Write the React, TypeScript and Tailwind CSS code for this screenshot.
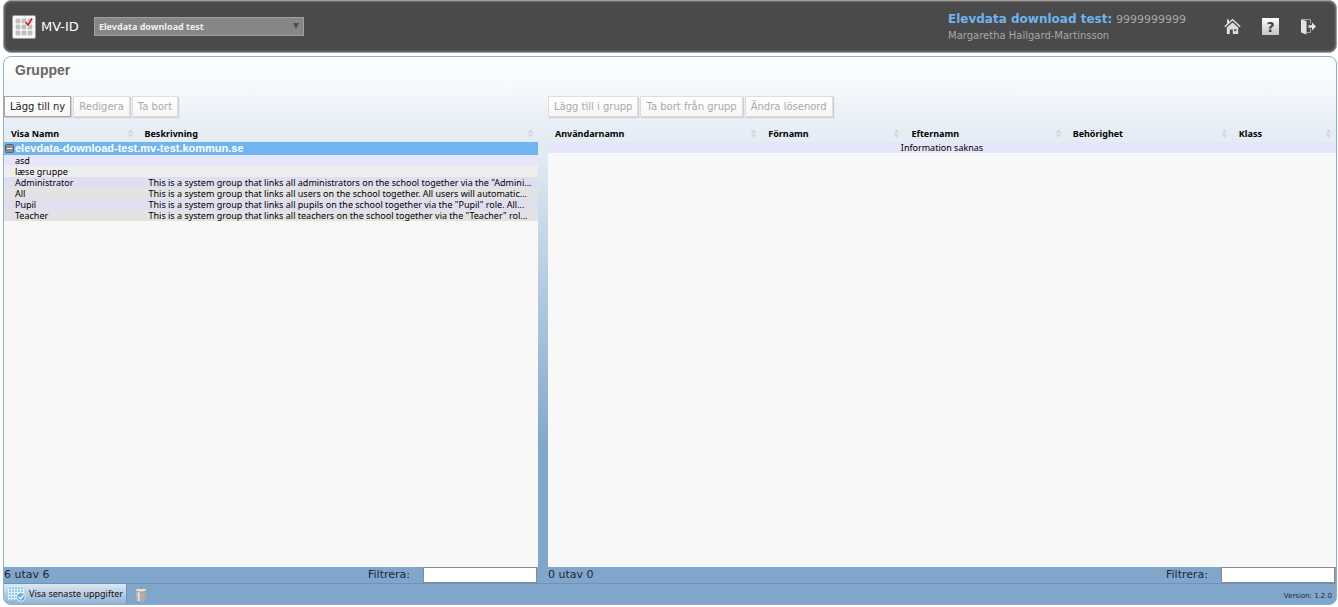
import React, { useState } from "react";

const GROUPS = [
  { name: "asd", text: "", tone: "bg-[#e6e6fa]" },
  { name: "læse gruppe", text: "", tone: "bg-[#eeeeee]" },
  { name: "Administrator", text: 'This is a system group that links all administrators on the school together via the "Admini...', tone: "bg-[#e0dff0]" },
  { name: "All", text: "This is a system group that links all users on the school together. All users will automatic...", tone: "bg-[#e3e3e3]" },
  { name: "Pupil", text: 'This is a system group that links all pupils on the school together via the "Pupil" role. All...', tone: "bg-[#e0dff0]" },
  { name: "Teacher", text: 'This is a system group that links all teachers on the school together via the "Teacher" rol...', tone: "bg-[#e3e3e3]" },
];

function Sort() {
  return (
    <svg viewBox="0 0 5 9" className="h-[9px] w-[5px] shrink-0 fill-[#d6d8da]" aria-hidden="true">
      <path d="M2.5 0 5 4H0zM2.5 9 5 5H0z" />
    </svg>
  );
}

function Heading({ label, width }: { label: string; width: string }) {
  return (
    <th scope="col" className={`p-0 text-left font-bold ${width}`}>
      <div className="flex h-4 items-center justify-between pr-[5px] pb-px pl-[7px]">
        <span>{label}</span>
        <Sort />
      </div>
    </th>
  );
}

function ToolButton({ children, disabled = false }: { children: React.ReactNode; disabled?: boolean }) {
  return (
    <button
      disabled={disabled}
      className="h-[21px] border border-[#a8a8a8] bg-linear-to-b from-white to-[#f6f6f6] px-[5px] text-[10px] leading-4 whitespace-nowrap text-[#222] shadow-[1px_1px_1px_#d0d0d0] disabled:border-[#dedede] disabled:text-[#a9a9a9]"
    >
      {children}
    </button>
  );
}

function PanelFooter({ count, id }: { count: string; id: string }) {
  const [value, setValue] = useState("");
  return (
    <div className="flex h-4 shrink-0 items-center bg-[#81a6cc] text-[11px] leading-4 text-[#1c2733]">
      <span className="grow">{count}</span>
      <label htmlFor={id} className="pr-[13px]">Filtrera:</label>
      <input
        id={id}
        value={value}
        onChange={(e) => setValue(e.target.value)}
        className="mr-px h-4 w-[114px] border border-[#8a8a8a] bg-white px-1 text-[10px]"
      />
    </div>
  );
}

function Logo() {
  return (
    <svg viewBox="0 0 24 24" className="size-6 shrink-0" aria-hidden="true">
      <rect x="0" y="0" width="24" height="24" rx="2" fill="#9a9a9a" />
      <rect x="1" y="1" width="22" height="22" rx="1" fill="#f8f8f8" />
      <path
        d="M4 4h4v4H4zM10 4h4v4h-4zM16 4h4v4h-4zM4 10h4v4H4zM10 10h4v4h-4zM16 10h4v4h-4zM4 16h4v4H4zM10 16h4v4h-4zM16 16h4v4h-4z"
        fill="#bdbdbd"
        stroke="#c4c4c4"
        strokeWidth=".8"
      />
      <path d="M13 7l3 3 4-6.500" fill="none" stroke="#f8f8f8" strokeWidth="3" />
      <path d="M13.500 7l2.500 3 4-6.500" fill="none" stroke="#dc1f2c" strokeWidth="1.800" />
    </svg>
  );
}

function HomeIcon() {
  return (
    <svg viewBox="0 0 17 17" className="size-[17px]" aria-hidden="true">
      <path d="M3 1.500h2v3L3 6.500z" fill="#dcdcdc" />
      <path d="M.8 8.800 8.500 1.600l7.700 7.200" fill="none" stroke="#ececec" strokeWidth="1.300" />
      <path d="M2.800 9.600 8.500 4.400l5.700 5.200V16H8.800v-4.500h-3V16h-3z" fill="#dcdcdc" />
      <path d="M10.300 11.200h2v2h-2z" fill="#4a4a4a" />
    </svg>
  );
}

function ExitIcon() {
  return (
    <svg viewBox="0 0 17 17" className="size-[17px]" aria-hidden="true">
      <path d="M2 1.500h8.500v4M10.500 11v3.500H6.500" fill="none" stroke="#a5a5a5" strokeWidth="1" />
      <path d="M1 1.500 6.500 3v13.500L1 14.500z" fill="#e2e2e2" />
      <path d="M8.500 7.200h3.500V4.500l4 4-4 4V9.800H8.500z" fill="#e6e6e6" />
    </svg>
  );
}

function LatestIcon() {
  return (
    <svg viewBox="0 0 18 16" className="h-4 w-[18px] shrink-0" aria-hidden="true">
      <rect width="16" height="14" fill="#8fcdec" />
      <path
        d="M0 .5h16M0 3.500h16M0 6.500h16M0 9.500h16M0 12.500h16M.5 0v14M3.500 0v14M6.500 0v14M9.500 0v14M12.500 0v14M15.500 0v14"
        stroke="#dceffa"
        strokeWidth="1"
      />
      <circle cx="13" cy="11" r="4.300" fill="#5fb0e0" stroke="#e6f4fc" strokeWidth="1" />
      <path d="M10.800 11l1.700 1.800 3-3.500" fill="none" stroke="#fff" strokeWidth="1.400" />
    </svg>
  );
}

function TrashIcon() {
  return (
    <svg viewBox="0 0 12 15" className="h-[15px] w-3" aria-hidden="true">
      <path d="M1 3.500h10l-.6 10.300Q6 15.500 1.600 13.800z" fill="#b9b8b0" />
      <path d="M3.800 5v9" stroke="#e6e5df" strokeWidth="1.600" />
      <path d="M5.800 5v9M8 5v9M9.700 5v8.500" stroke="#98978f" strokeWidth=".6" />
      <ellipse cx="6" cy="3" rx="5.700" ry="1.900" fill="#e4e3dc" stroke="#8f8e87" strokeWidth=".6" />
      <path d="M4.500 1.500Q6 0 7.500 1.500" fill="none" stroke="#77766f" strokeWidth=".9" />
    </svg>
  );
}

export default function App() {
  return (
    <div className="flex min-h-screen flex-col bg-white pr-px pb-[2px] pl-[3px] font-['DejaVu_Sans',sans-serif] text-black">
      <header className="flex h-[53px] shrink-0 items-center rounded-lg border border-[#a0a0a0] bg-[#4a4a4a] pr-[19px] pl-2 shadow-[inset_0_0_3px_#999]">
        <Logo />
        <span className="ml-[5px] text-[13px] leading-4 text-white">MV-ID</span>
        <div className="relative ml-[15px] w-[210px]">
          <select
            aria-label="Skola"
            className="block h-[19px] w-full appearance-none border border-[#a0a0a0] bg-[#868686] pl-1 font-['Noto_Sans',sans-serif] text-[9px] font-bold text-[#eee]"
          >
            <option>Elevdata download test</option>
          </select>
          <svg viewBox="0 0 6 6" className="pointer-events-none absolute top-[6px] right-[5px] size-[6px] fill-[#505050]" aria-hidden="true">
            <path d="M0 0h6L3 6z" />
          </svg>
        </div>
        <div className="ml-auto w-[276px] pt-[2px]">
          <div className="text-[12px] leading-4 text-[#a8a8a8]">
            <b className="text-[#6fb3ef]">Elevdata download test:</b> <span className="text-[11px]">9999999999</span>
          </div>
          <div className="text-[10px] leading-4 text-[#a8a8a8]">Margaretha Hallgard-Martinsson</div>
        </div>
        <nav className="flex items-center gap-[21px]">
          <a href="#home" aria-label="Hem"><HomeIcon /></a>
          <a
            href="#help"
            className="flex size-[17px] items-center justify-center bg-linear-to-b from-white to-[#c4c4c4] text-[14px] leading-none font-bold text-[#444]"
          >
            ?
          </a>
          <a href="#logout" aria-label="Logga ut"><ExitIcon /></a>
        </nav>
      </header>
      <main className="mt-[3px] flex grow flex-col overflow-hidden rounded-lg border border-[#8fb0d0] bg-[linear-gradient(#fff_0px,#f6f9fc_30px,#e8eef6_68px,#e0eaf2_100px,#c9dae9_165px,#b1c9df_240px,#81a6cc_395px)]">
        <h1 className="h-[37px] pt-[3px] pl-[11px] font-['Liberation_Sans',sans-serif] text-[14px] leading-5 font-bold text-[#666960]">Grupper</h1>
        <div className="flex grow gap-[10px]">
          <section className="flex min-w-0 grow-[534] basis-0 flex-col">
            <div className="flex h-8 shrink-0 gap-[2px] pt-[2px]">
              <ToolButton>Lägg till ny</ToolButton>
              <ToolButton disabled>Redigera</ToolButton>
              <ToolButton disabled>Ta bort</ToolButton>
            </div>
            <table className="w-full table-fixed font-['Noto_Sans',sans-serif] text-[9px] leading-[11px]">
              <thead>
                <tr>
                  <Heading label="Visa Namn" width="w-1/4" />
                  <Heading label="Beskrivning" width="w-3/4" />
                </tr>
              </thead>
              <tbody>
                <tr className="bg-[#70b5f0]">
                  <th colSpan={2} scope="colgroup" className="p-0 text-left">
                    <div className="flex h-[13px] items-center gap-px pl-px font-['Liberation_Sans',sans-serif] text-[11px] leading-[13px] font-bold text-white">
                      <svg viewBox="0 0 9 9" className="size-[9px]" aria-hidden="true">
                        <rect x=".5" y=".5" width="8" height="8" rx="1" fill="#8a8a8a" stroke="#5d6670" />
                        <path d="M2 4.500h5" stroke="#fff" />
                      </svg>
                      elevdata-download-test.mv-test.kommun.se
                    </div>
                  </th>
                </tr>
                {GROUPS.map((g) => (
                  <tr key={g.name} className={g.tone}>
                    <td className="h-[11px] p-0 pl-[11px]">{g.name}</td>
                    <td className="h-[11px] overflow-hidden p-0 pl-[11px] whitespace-nowrap">{g.text}</td>
                  </tr>
                ))}
              </tbody>
            </table>
            <div className="grow bg-[#f8f8f8]" />
            <PanelFooter count="6 utav 6" id="filter-groups" />
          </section>
          <section className="flex min-w-0 grow-[788] basis-0 flex-col">
            <div className="flex h-8 shrink-0 gap-[2px] pt-[2px]">
              <ToolButton disabled>Lägg till i grupp</ToolButton>
              <ToolButton disabled>Ta bort från grupp</ToolButton>
              <ToolButton disabled>Ändra lösenord</ToolButton>
            </div>
            <table className="w-full table-fixed font-['Noto_Sans',sans-serif] text-[9px] leading-[11px]">
              <thead>
                <tr>
                  <Heading label="Användarnamn" width="w-[213px]" />
                  <Heading label="Förnamn" width="w-[143px]" />
                  <Heading label="Efternamn" width="w-[161px]" />
                  <Heading label="Behörighet" width="w-[166px]" />
                  <Heading label="Klass" width="w-[104px]" />
                </tr>
              </thead>
              <tbody>
                <tr className="bg-[#e6e6fa]">
                  <td colSpan={5} className="h-[11px] p-0 text-center">Information saknas</td>
                </tr>
              </tbody>
            </table>
            <div className="grow bg-[#f8f8f8]" />
            <PanelFooter count="0 utav 0" id="filter-users" />
          </section>
        </div>
        <footer className="flex h-[21px] shrink-0 items-center border-t border-[#6d93bd] bg-[#81a6cc]">
          <button className="flex h-full items-center gap-[3px] border-r border-[#6d93bd] bg-linear-to-b from-[#dde8f3] to-[#92b2d3] pr-[3px] pl-1 font-['Noto_Sans',sans-serif] text-[9px] leading-4 whitespace-nowrap text-[#111]">
            <LatestIcon />
            Visa senaste uppgifter
          </button>
          <button aria-label="Papperskorg" className="ml-2"><TrashIcon /></button>
          <span className="ml-auto pt-1 pr-1 text-[7px] leading-3 text-[#1c2733]">Version: 1.2.0</span>
        </footer>
      </main>
    </div>
  );
}
